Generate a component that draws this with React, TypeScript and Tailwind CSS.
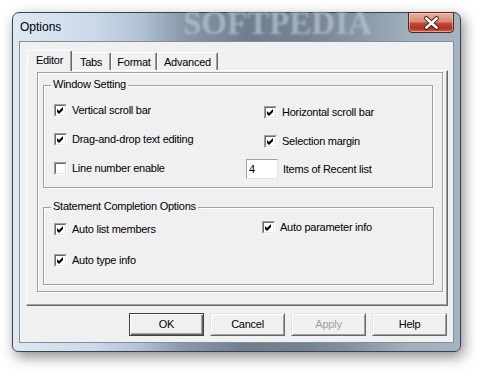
import React from "react";

function Check({ checked }: { checked: boolean }) {
  return (
    <span className="flex w-[13px] h-[13px] shrink-0 border border-t-[#a0a0a0] border-l-[#a0a0a0] border-r-white border-b-white">
      <span className="flex flex-1 items-center justify-center border border-t-[#696969] border-l-[#696969] border-r-[#e3e3e3] border-b-[#e3e3e3] bg-white">
        {checked && (
          <svg width="7" height="7" viewBox="0 0 7 7">
            <path d="M0 2 L2 4 L6 0 L6 3 L2 7 L0 5 Z" fill="#000" />
          </svg>
        )}
      </span>
    </span>
  );
}

function CheckRow({ label, checked, className = "" }: { label: string; checked: boolean; className?: string }) {
  return (
    <div className={"flex h-[20px] items-center gap-[5px] " + className}>
      <Check checked={checked} />
      <span>{label}</span>
    </div>
  );
}

function Group({ title, className, children }: { title: string; className: string; children: React.ReactNode }) {
  return (
    <div className={"relative border border-[#a0a0a0] shadow-[inset_1px_1px_0_#fff,1px_1px_0_#fff] " + className}>
      <span className="absolute left-[7px] top-[-8px] bg-[#f0f0f0] px-[2px] leading-[13px]">{title}</span>
      {children}
    </div>
  );
}

function Btn({ label, def = false, disabled = false }: { label: string; def?: boolean; disabled?: boolean }) {
  return (
    <div
      className={
        "flex w-[75px] h-[23px] items-center justify-center bg-[#f0f0f0] " +
        (def
          ? "border border-[#404040] shadow-[inset_1px_1px_0_#fff,inset_-1px_-1px_0_#696969,inset_-2px_-2px_0_#a0a0a0]"
          : "border border-t-[#e3e3e3] border-l-[#e3e3e3] border-r-[#696969] border-b-[#696969] shadow-[inset_1px_1px_0_#fff,inset_-1px_-1px_0_#a0a0a0]")
      }
    >
      <span className={disabled ? "text-[#a0a0a0]" : "text-black"}>{label}</span>
    </div>
  );
}

export default function App() {
  return (
    <div className="w-[481px] h-[371px] bg-white pt-[12px] pl-[12px] font-['Liberation_Sans',Arial,sans-serif] text-[11px] tracking-[-0.25px] text-black">
      <div className="relative flex flex-col w-[449px] h-[340px] rounded-t-[7px] rounded-b-[6px] border border-[#38434d] bg-[linear-gradient(90deg,#dde8f3_0%,#cbd9e8_18%,#b3c4d6_28%,#8999a8_38%,#6f7f8d_52%,#74838f_66%,#8998a5_78%,#a0afbc_88%,#a5b4c1_100%)] shadow-[3px_5px_14px_rgba(0,0,0,0.45)]">
        {/* title bar */}
        <div className="relative flex h-[28px] items-center justify-between">
          <span className="pl-[7px] text-[12px] tracking-normal">Options</span>
          <span className="pointer-events-none absolute left-[170px] top-[-6px] font-['Liberation_Serif',serif] text-[33px] leading-[33px] font-bold tracking-normal text-[#b8c6d3] opacity-70 blur-[1.2px]">
            SOFTPEDIA
          </span>
          <div className="relative z-10 -mt-px mr-[6px] self-start w-[46px] h-[21px] rounded-b-[4px] border border-[#4d2a22] bg-[linear-gradient(180deg,#e9b0a2_0%,#d98a78_45%,#c24a34_55%,#b0321f_80%,#d2654c_100%)] shadow-[inset_0_0_0_1px_rgba(255,220,210,0.5)] flex items-center justify-center">
            <svg width="46" height="20" viewBox="0 0 46 20">
              <path d="M18 5 L29 15 M29 5 L18 15" stroke="#3b1710" strokeWidth="4.5" strokeLinecap="round" />
              <path d="M18 5 L29 15 M29 5 L18 15" stroke="#fff" strokeWidth="2.6" strokeLinecap="round" />
            </svg>
          </div>
        </div>
        {/* client */}
        <div className="mx-[6px] flex w-[435px] h-[302px] flex-col border border-[#7f8f9c] bg-[#f0f0f0]">
          {/* tabs */}
          <div className="relative z-10 -mb-px flex h-[29px] items-end pl-[7px] pt-[8px]">
            <div className="flex w-[45px] h-[21px] items-start justify-center rounded-t-[2px] border-l border-t border-r border-l-white border-t-white border-r-[#696969] bg-[#f0f0f0] pt-[1px] shadow-[inset_-1px_0_0_#a0a0a0]">
              Editor
            </div>
            <div className="mb-px flex w-[39px] h-[18px] items-start justify-center rounded-t-[2px] border-t border-r border-t-white border-r-[#696969] pt-[1px] shadow-[inset_-1px_0_0_#a0a0a0]">
              Tabs
            </div>
            <div className="mb-px flex w-[46px] h-[18px] items-start justify-center rounded-t-[2px] border-l border-t border-r border-l-white border-t-white border-r-[#696969] pt-[1px] shadow-[inset_-1px_0_0_#a0a0a0]">
              Format
            </div>
            <div className="mb-px flex w-[61px] h-[18px] items-start justify-center rounded-t-[2px] border-l border-t border-r border-l-white border-t-white border-r-[#696969] pt-[1px] shadow-[inset_-1px_0_0_#a0a0a0]">
              Advanced
            </div>
          </div>
          {/* panel */}
          <div className="ml-[6px] w-[422px] h-[236px] border border-t-white border-l-white border-r-[#696969] border-b-[#696969] shadow-[inset_-1px_-1px_0_#a0a0a0]">
            <div className="ml-[10px] mt-[1px] flex w-[406px] h-[220px] flex-col border border-[#a0a0a0] shadow-[inset_1px_1px_0_#fff,1px_1px_0_#fff]">
              <Group title="Window Setting" className="ml-[5px] mt-[12px] w-[390px] h-[103px] flex">
                <div className="ml-[10px] w-[192px] pt-[14px] flex flex-col">
                  <CheckRow label="Vertical scroll bar" checked />
                  <CheckRow label="Drag-and-drop text editing" checked className="mt-[9px]" />
                  <CheckRow label="Line number enable" checked={false} className="mt-[9px]" />
                </div>
                <div className="pt-[16px] flex flex-col">
                  <CheckRow label="Horizontal scroll bar" checked className="pl-[18px]" />
                  <CheckRow label="Selection margin" checked className="pl-[18px] mt-[9px]" />
                  <div className="mt-[8px] flex h-[20px] items-center gap-[5px]">
                    <div className="flex w-[32px] h-[20px] items-center border border-t-[#a0a0a0] border-l-[#a0a0a0] border-r-[#e3e3e3] border-b-[#e3e3e3] bg-white pl-[2px]">
                      4
                    </div>
                    <span>Items of Recent list</span>
                  </div>
                </div>
              </Group>
              <Group title="Statement Completion Options" className="ml-[5px] mt-[19px] w-[391px] h-[78px] flex">
                <div className="ml-[10px] w-[208px] pt-[11px] flex flex-col">
                  <CheckRow label="Auto list members" checked />
                  <CheckRow label="Auto type info" checked className="mt-[11px]" />
                </div>
                <div className="pt-[9px] flex flex-col">
                  <CheckRow label="Auto parameter info" checked />
                </div>
              </Group>
            </div>
          </div>
          {/* buttons */}
          <div className="mt-[7px] flex justify-end gap-[6px] pr-[6px]">
            <Btn label="OK" def />
            <Btn label="Cancel" />
            <Btn label="Apply" disabled />
            <Btn label="Help" />
          </div>
        </div>
      </div>
    </div>
  );
}
